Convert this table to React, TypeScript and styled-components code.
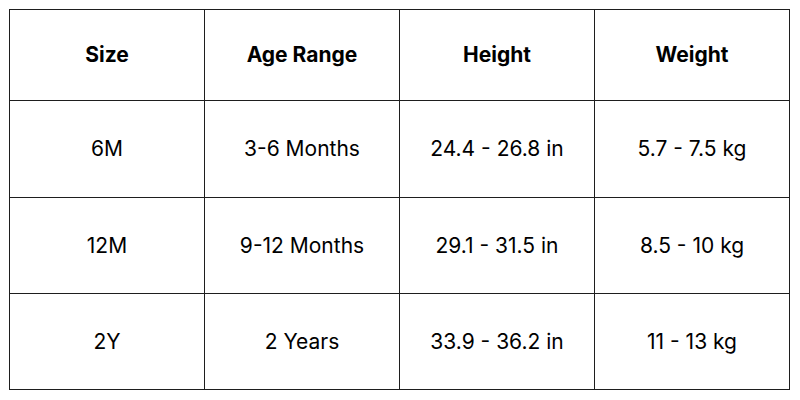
import React from "react";
import styled, { createGlobalStyle } from "styled-components";

const Global = createGlobalStyle`
  html, body { margin: 0; padding: 0; background: #ffffff; }
  body { font-family: Inter, "Noto Sans", "Liberation Sans", sans-serif; color: #000; }
`;

const Page = styled.div`
  width: 800px;
  height: 400px;
  padding: 9px;
  box-sizing: border-box;
  background: #fff;
`;

const Grid = styled.div`
  display: grid;
  grid-template-columns: repeat(4, 195px);
  grid-template-rows: 91px 97px 96px 96px;
  width: max-content;
  border-left: 1px solid #1e1e1e;
  border-top: 1px solid #1e1e1e;
`;

const Cell = styled.div<{ $head?: boolean }>`
  box-sizing: border-box;
  border-right: 1px solid #1e1e1e;
  border-bottom: 1px solid #1e1e1e;
  display: flex;
  align-items: center;
  justify-content: center;
  font-size: 21px;
  font-weight: ${(p) => (p.$head ? 700 : 400)};
  color: #000;
  padding-bottom: 1px;
`;

const headers = ["Size", "Age Range", "Height", "Weight"];
const rows = [
  ["6M", "3-6 Months", "24.4 - 26.8 in", "5.7 - 7.5 kg"],
  ["12M", "9-12 Months", "29.1 - 31.5 in", "8.5 - 10 kg"],
  ["2Y", "2 Years", "33.9 - 36.2 in", "11 - 13 kg"],
];

export default function App() {
  return (
    <Page>
      <Global />
      <Grid>
        {headers.map((h) => (
          <Cell key={h} $head>
            {h}
          </Cell>
        ))}
        {rows.map((r, i) =>
          r.map((c, j) => <Cell key={`${i}-${j}`}>{c}</Cell>)
        )}
      </Grid>
    </Page>
  );
}
